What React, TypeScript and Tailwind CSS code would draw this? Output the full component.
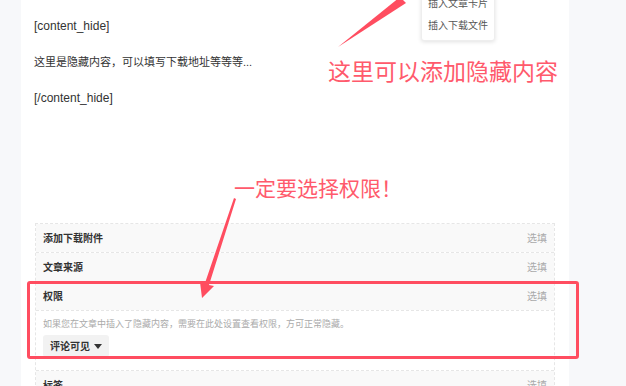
import { ReactNode } from 'react'

const font = { fontFamily: '"Liberation Sans", "Noto Sans CJK SC", sans-serif' }

function Row({ label, children, last }: { label: string; children?: ReactNode; last?: boolean }) {
  return (
    <div className={last ? '' : 'border-b border-dashed border-[#e6e6e6]'}>
      <div className="h-[28px] flex items-center justify-between px-[7px] bg-[#f9f9f9]">
        <span className="text-[10px] font-bold text-[#333]">{label}</span>
        <span className="text-[10px] text-[#aaa]">选填</span>
      </div>
      {children}
    </div>
  )
}

export default function App() {
  return (
    <div className="relative w-[626px] h-[386px] overflow-hidden bg-[#f7f8fa]" style={font}>
      <div className="ml-[21px] w-[548px] h-full bg-white pl-[13px] pr-[14px]">
        {/* editor content */}
        <div className="pt-[17px] text-[12px] leading-[18px] text-[#333] flex flex-col gap-[18px]">
          <p>[content_hide]</p>
          <p className="text-[11px]">这里是隐藏内容，可以填写下载地址等等等...</p>
          <p>[/content_hide]</p>
        </div>

        {/* options panel */}
        <div className="mt-[116px] ml-px border border-dashed border-[#e6e6e6]">
          <Row label="添加下载附件" />
          <Row label="文章来源" />
          <Row label="权限">
            <div className="border-t border-dashed border-[#e6e6e6] bg-white h-[60px] px-[7px] pt-[7px]">
              <p className="text-[9px] leading-[12px] text-[#aaa]">
                如果您在文章中插入了隐藏内容，需要在此处设置查看权限，方可正常隐藏。
              </p>
              <button className="mt-[5px] h-[22px] px-[7px] flex items-center gap-[4px] rounded-[3px] bg-[#f2f2f2] text-[10px] font-semibold text-[#333]">
                评论可见
                <svg width="8" height="5" viewBox="0 0 8 5"><path d="M0 0h8L4 5z" fill="#333" /></svg>
              </button>
            </div>
          </Row>
          <Row label="标签" last />
        </div>
      </div>

      {/* insert menu */}
      <div className="absolute left-[421px] top-[-13px] w-[74px] bg-white rounded-[3px] border border-[#eee] shadow-[0_1px_4px_rgba(0,0,0,0.12)] py-[4px] text-[10px] text-[#555]">
        <div className="h-[22px] flex items-center justify-center">插入文章卡片</div>
        <div className="h-[22px] flex items-center justify-center">插入下载文件</div>
      </div>

      {/* annotations */}
      <svg className="absolute left-0 top-0" width="626" height="386">
        <polygon points="338,47 400,-3 406,3" fill="#ff4d60" />
        <polygon points="234,198 236,199 209,285 214,286 202,298 200,282 205,283" fill="#ff4d60" />
      </svg>
      <div className="absolute left-[328px] top-[58px] text-[23px] leading-[28px] text-[#ff5a6c]">这里可以添加隐藏内容</div>
      <div className="absolute left-[234px] top-[176px] text-[21px] leading-[26px] text-[#ff5a6c]">一定要选择权限！</div>
      <div className="absolute left-[27px] top-[281px] w-[552px] h-[78px] border-[3px] border-[#ff4d60] rounded-[3px]" />
    </div>
  )
}
